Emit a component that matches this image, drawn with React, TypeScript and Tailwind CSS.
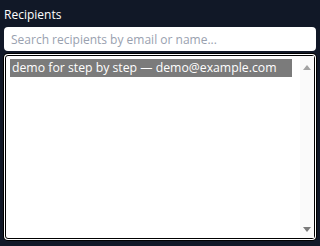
const recipients = [
  { id: 'demo', label: 'demo for step by step — demo@example.com', selected: true },
];

export default function App() {
  return (
    <div className="min-h-[246px] bg-[#111827] px-1 pt-[7px] font-['Open_Sans',sans-serif]">
      <label className="block text-[12px] leading-[16px] text-white">Recipients</label>
      <input
        type="text"
        placeholder="Search recipients by email or name..."
        className="mt-[4px] block h-[24px] w-full rounded bg-white px-[7px] text-[12px] text-gray-900 placeholder:text-gray-400 outline-none"
      />
      <RecipientList />
    </div>
  );
}

function RecipientList() {
  return (
    <div className="mx-[1px] mt-[4px] flex h-[184px] rounded-[3px] border border-black bg-white shadow-[0_0_0_1px_#fff,0_0_0_2px_#000]">
      <div className="flex-1 pl-[4px] pr-[8px] pt-[3px]">
        {recipients.map((r) => (
          <div
            key={r.id}
            className={
              r.selected
                ? 'bg-[#7b7b7b] pl-[2px] text-[12.25px] leading-[18px] text-white'
                : 'pl-[2px] text-[12.25px] leading-[18px] text-gray-900'
            }
          >
            {r.label}
          </div>
        ))}
      </div>
      <div className="flex w-[14px] flex-col items-center justify-between bg-[#fafafa] pb-[6px] pt-[9px]">
        <div className="h-0 w-0 border-x-[4px] border-b-[5px] border-x-transparent border-b-[#a3a3a3]" />
        <div className="h-0 w-0 border-x-[4px] border-t-[5px] border-x-transparent border-t-[#7b7b7b]" />
      </div>
    </div>
  );
}
